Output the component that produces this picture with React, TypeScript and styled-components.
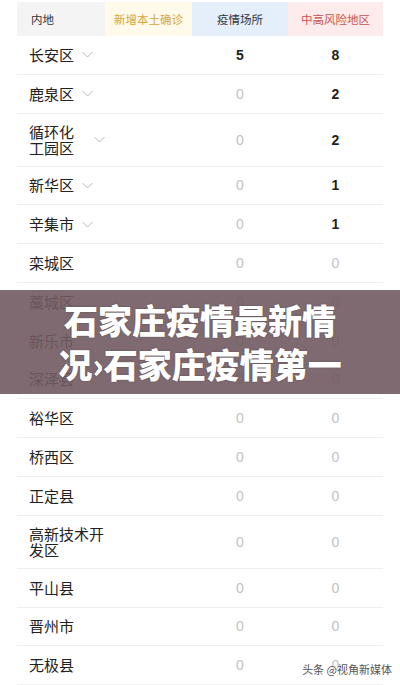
import React from "react";
import styled, { createGlobalStyle } from "styled-components";

const GlobalStyle = createGlobalStyle`
  html, body {
    margin: 0;
    padding: 0;
    background: #ffffff;
    overflow: hidden;
  }
  body {
    font-family: "Noto Sans CJK SC", "Noto Sans", sans-serif;
  }
`;

type Row = {
  name: string;
  drop?: boolean;
  place: number;
  risk: number;
};

const rows: Row[] = [
  { name: "长安区", drop: true, place: 5, risk: 8 },
  { name: "鹿泉区", drop: true, place: 0, risk: 2 },
  { name: "循环化工园区", drop: true, place: 0, risk: 2 },
  { name: "新华区", drop: true, place: 0, risk: 1 },
  { name: "辛集市", drop: true, place: 0, risk: 1 },
  { name: "栾城区", place: 0, risk: 0 },
  { name: "藁城区", place: 0, risk: 0 },
  { name: "新乐市", place: 0, risk: 0 },
  { name: "深泽县", place: 0, risk: 0 },
  { name: "裕华区", place: 0, risk: 0 },
  { name: "桥西区", place: 0, risk: 0 },
  { name: "正定县", place: 0, risk: 0 },
  { name: "高新技术开发区", place: 0, risk: 0 },
  { name: "平山县", place: 0, risk: 0 },
  { name: "晋州市", place: 0, risk: 0 },
  { name: "无极县", place: 0, risk: 0 },
];

const Page = styled.div`
  position: relative;
  height: 685px;
  overflow: hidden;
  padding: 2px 17px 0;
`;

const Grid = styled.div`
  display: grid;
  grid-template-columns: 88px 87px 96px 95px;
`;

const Head = styled.div<{ $bg: string; $color: string; $left?: boolean }>`
  height: 34px;
  display: flex;
  align-items: center;
  justify-content: ${(p) => (p.$left ? "flex-start" : "center")};
  padding-left: ${(p) => (p.$left ? "14px" : "0")};
  background: ${(p) => p.$bg};
  color: ${(p) => p.$color};
  font-size: 11.5px;
`;

const BodyRow = styled.div`
  grid-column: 1 / -1;
  display: grid;
  grid-template-columns: 88px 87px 96px 95px;
  min-height: 38.8px;
  box-sizing: border-box;
  padding: 10px 0;
  border-bottom: 1px solid #efefef;
  align-items: center;
`;

const NameCell = styled.div`
  display: flex;
  align-items: center;
  width: 76px;
  padding-left: 12px;
  grid-column: 1 / 3;
`;

const Name = styled.span`
  font-size: 15px;
  line-height: 16px;
  color: #222;
  min-width: 0;
`;

const Chevron = styled.svg`
  flex: 0 0 auto;
  margin-left: 8px;
  width: 11px;
  height: 7px;
`;

const Num = styled.div<{ $strong: boolean }>`
  text-align: center;
  font-size: 14px;
  font-family: "Liberation Sans", "Noto Sans", sans-serif;
  font-weight: ${(p) => (p.$strong ? 700 : 400)};
  color: ${(p) => (p.$strong ? "#1e1e1e" : "#c2c2c2")};
`;

const Banner = styled.div`
  position: absolute;
  left: 0;
  right: 0;
  top: 290px;
  height: 104px;
  background: rgba(112, 90, 97, 0.9);
  display: flex;
  align-items: center;
  justify-content: center;
`;

const Title = styled.div`
  color: #fff;
  font-size: 34px;
  line-height: 44px;
  font-weight: 900;
  text-align: center;
  text-shadow: 0 0 2px rgba(0, 0, 0, 0.25);
`;

const Mark = styled.div`
  position: absolute;
  right: 8px;
  bottom: 10px;
  font-size: 11px;
  color: #555;
  text-shadow: 0 0 2px #fff, 0 0 2px #fff;
`;

const ChevronIcon = () => (
  <Chevron viewBox="0 0 11 7">
    <polyline points="0.5,1 5.5,6 10.5,1" fill="none" stroke="#b8b8b8" strokeWidth="1" />
  </Chevron>
);

export default function App() {
  return (
    <Page>
      <GlobalStyle />
      <Grid>
        <Head $bg="#f4f4f4" $color="#333" $left>
          内地
        </Head>
        <Head $bg="#fffaea" $color="#d6a63c">
          新增本土确诊
        </Head>
        <Head $bg="#e5eefb" $color="#333">
          疫情场所
        </Head>
        <Head $bg="#fdeceb" $color="#c8534b">
          中高风险地区
        </Head>
        {rows.map((r) => (
          <BodyRow key={r.name}>
            <NameCell>
              <Name>{r.name}</Name>
              {r.drop && <ChevronIcon />}
            </NameCell>
            <Num $strong={r.place > 0}>{r.place}</Num>
            <Num $strong={r.risk > 0}>{r.risk}</Num>
          </BodyRow>
        ))}
      </Grid>
      <Banner>
        <Title>
          石家庄疫情最新情
          <br />
          况›石家庄疫情第一
        </Title>
      </Banner>
      <Mark>头条 @视角新媒体</Mark>
    </Page>
  );
}
